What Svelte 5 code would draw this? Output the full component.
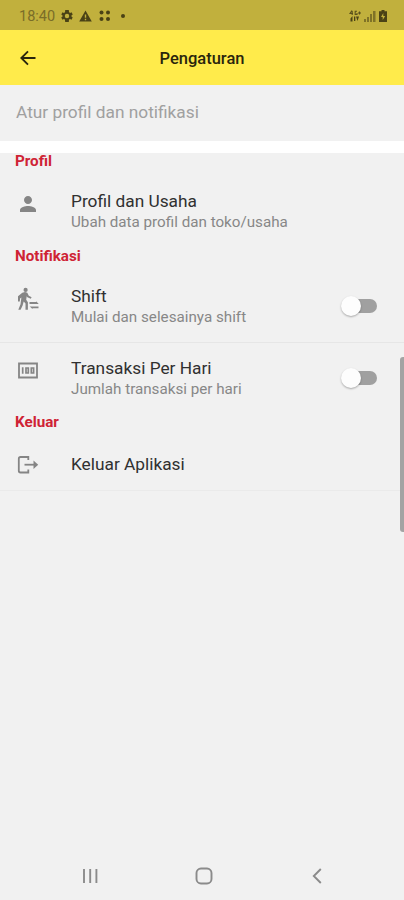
<script lang="ts">
  type Item = {
    icon: string;
    title: string;
    subtitle?: string;
    toggle?: boolean;
    divider?: boolean;
  };

  type Section = {
    label: string;
    items: Item[];
  };

  const sections: Section[] = [
    {
      label: "Profil",
      items: [
        { icon: "person", title: "Profil dan Usaha", subtitle: "Ubah data profil dan toko/usaha" },
      ],
    },
    {
      label: "Notifikasi",
      items: [
        { icon: "shift", title: "Shift", subtitle: "Mulai dan selesainya shift", toggle: true, divider: true },
        { icon: "money", title: "Transaksi Per Hari", subtitle: "Jumlah transaksi per hari", toggle: true },
      ],
    },
    {
      label: "Keluar",
      items: [{ icon: "logout", title: "Keluar Aplikasi", divider: true }],
    },
  ];

  let enabled: Record<string, boolean> = $state({ shift: false, money: false });
</script>

<div class="screen">
  <div class="status">
    <span class="clock">18:40</span>
    <svg class="gear" width="12" height="12" viewBox="2 2 20 20">
      <path fill-rule="evenodd" d="M19.4 13l2.1 1.6-2 3.5-2.5-1a7 7 0 0 1-1.7 1L15 22H9l-.4-3.9a7 7 0 0 1-1.7-1l-2.5 1-2-3.5L4.6 13a7 7 0 0 1 0-2L2.5 9.4l2-3.5 2.500 1a7 7 0 0 1 1.700-1L9 2h6l.4 3.900a7 7 0 0 1 1.700 1l2.500-1 2 3.500-2.200 1.600a7 7 0 0 1 0 2zM12 8.300a3.700 3.700 0 1 0 0 7.400 3.700 3.700 0 0 0 0-7.400z" />
    </svg>
    <svg class="warn" width="13" height="12" viewBox="0 0 13 12">
      <path fill-rule="evenodd" d="M6.500.5L12.800 11.500H.2zM5.800 4.500v3.300h1.400V4.500zM5.800 8.800v1.400h1.400V8.800z" />
    </svg>
    <svg class="apps" width="12" height="12" viewBox="0 0 12 12">
      <circle cx="2.500" cy="2.500" r="2" />
      <circle cx="9" cy="2.500" r="2" />
      <circle cx="2.500" cy="9" r="2" />
      <circle cx="9" cy="9" r="2" />
    </svg>
    <span class="dot"></span>
    <div class="signals">
      <svg width="12" height="12" viewBox="0 0 12 12">
        <path fill="none" stroke="currentColor" stroke-width="1.100" d="M3 .5L1 3.500h3M3.200 1v4M8 1.300H6.200v3.200H8V3M9 3h3M10.500 1.500v3" />
        <path d="M1.500 8.500L3.500 6v5.500H1.500zM5 6.500h1.300V11H5zM7 6.500h3L8.500 11z" />
      </svg>
      <svg width="12" height="12" viewBox="0 0 12 12">
        <path opacity=".55" d="M0 9h2v3H0zM3 7h2v5H3zM6 4h2v8H6zM9 1h2.500v11H9z" />
      </svg>
      <svg width="8" height="12" viewBox="0 0 8 12">
        <path fill-rule="evenodd" d="M2.500 0h3v1.300H8V12H0V1.300h2.500zM4.300 3L2 7h1.700v3L6.200 6H4.300z" />
      </svg>
    </div>
  </div>

  <header>
    <button class="back" aria-label="Kembali">
      <svg width="16" height="16" viewBox="0 0 16 16">
        <path d="M15.500 8H1.500M8 1.300L1.300 8 8 14.700" />
      </svg>
    </button>
    <h1>Pengaturan</h1>
  </header>

  <p class="intro">Atur profil dan notifikasi</p>

  <main>
    {#each sections as section}
      <h2>{section.label}</h2>
      {#each section.items as item}
        <div class="row" class:single={!item.subtitle} class:divider={item.divider}>
          <div class="icon">
            {#if item.icon === "person"}
              <svg width="24" height="24" viewBox="0 0 24 24">
                <path d="M12 12c2.210 0 4-1.790 4-4s-1.790-4-4-4-4 1.790-4 4 1.790 4 4 4zm0 2c-2.670 0-8 1.340-8 4v2h16v-2c0-2.660-5.330-4-8-4z" />
              </svg>
            {:else if item.icon === "shift"}
              <svg width="24" height="24" viewBox="0 0 24 24">
                <circle cx="9.600" cy="2.900" r="2.100" />
                <path d="M6.300 5.800L9 5l2.300.7 1.500 3 2.800 1.500-.8 1.600-3.400-1.600-.7-1-.5 3.500 1.700 2.500v7.600H9.500v-6.300l-1.800-2-1.100 4-2 4.300H2.300l2.200-5.500.9-6.700-1.300.8-.3 3H2V9.300z" />
                <path d="M13.500 16.900V15h6.700v-.8l2.500 2.700zM22.500 19.500v1.800h-6v.8l-2.800-2.600z" />
              </svg>
            {:else if item.icon === "money"}
              <svg width="24" height="24" viewBox="0 0 24 24">
                <path class="line" d="M3 4.500h18v14H3z" />
                <path class="line digits" d="M6.700 8.300v6.400M10 9h2.300v5H10zM15.300 9h2.300v5h-2.300z" />
              </svg>
            {:else}
              <svg width="24" height="24" viewBox="0 0 24 24">
                <path class="line" d="M12.300 7V4H4.500Q2.800 4 2.800 5.700v12.100q0 1.700 1.700 1.700h7.800V16.500" />
                <path class="line" d="M8.500 11.700H20" />
                <path d="M17.500 7.500l4.700 4.200-4.700 4.200z" />
              </svg>
            {/if}
          </div>
          <div class="text">
            <span class="title">{item.title}</span>
            {#if item.subtitle}
              <span class="subtitle">{item.subtitle}</span>
            {/if}
          </div>
          {#if item.toggle}
            <button
              class="switch"
              class:on={enabled[item.icon]}
              role="switch"
              aria-checked={enabled[item.icon]}
              aria-label={item.title}
              onclick={() => (enabled[item.icon] = !enabled[item.icon])}
            >
              <span class="thumb"></span>
            </button>
          {/if}
        </div>
      {/each}
    {/each}
  </main>

  <nav>
    <svg width="16" height="16" viewBox="0 0 16 16">
      <path d="M2 1v14M8.200 1v14M14.400 1v14" />
    </svg>
    <svg width="18" height="18" viewBox="0 0 18 18">
      <rect x="1.500" y="1.500" width="15" height="15" rx="4.500" />
    </svg>
    <svg width="16" height="16" viewBox="0 0 16 16">
      <path d="M11.800 1L4.800 8l7 7" />
    </svg>
  </nav>

  <div class="scrollbar"></div>
</div>

<style>
  :global(body) {
    background: #f1f1f1;
  }
  .screen {
    position: relative;
    display: flex;
    flex-direction: column;
    width: 404px;
    height: 900px;
    overflow: hidden;
    background: #f1f1f1;
    font-family: Roboto, "Liberation Sans", sans-serif;
  }
  svg {
    display: block;
    flex: none;
  }
  button {
    padding: 0;
    border: 0;
    background: none;
  }
  .status {
    display: flex;
    align-items: center;
    flex: none;
    box-sizing: border-box;
    height: 30px;
    padding: 1px 17px 0 19px;
    background: #c1b03d;
    color: #5a511c;
    fill: #4a4216;
  }
  .clock {
    width: 42px;
    padding-top: 1px;
    font-size: 14.5px;
    color: #7a6d28;
  }
  .warn {
    margin-left: 6px;
  }
  .apps {
    margin-left: 7px;
  }
  .dot {
    width: 4px;
    height: 4px;
    margin-left: 10px;
    border-radius: 50%;
    background: #4a4216;
  }
  .signals {
    display: flex;
    gap: 3px;
    margin-left: auto;
  }
  header {
    display: grid;
    grid-template-columns: 60px 1fr 60px;
    align-items: center;
    flex: none;
    height: 55px;
    background: #ffeb4b;
  }
  .back {
    padding-left: 20px;
  }
  .back svg {
    fill: none;
    stroke: #29250d;
    stroke-width: 1.9;
  }
  h1 {
    margin: 0;
    padding-top: 1px;
    font-size: 16.5px;
    font-weight: 500;
    text-align: center;
    color: #29250d;
  }
  .intro {
    flex: none;
    box-sizing: border-box;
    height: 68px;
    margin: 0;
    padding-left: 16px;
    border-bottom: 12px solid #fff;
    font-size: 17.3px;
    line-height: 55px;
    color: #a0a0a0;
  }
  main {
    flex: 1;
  }
  h2 {
    height: 23px;
    margin: 0;
    padding-left: 15px;
    font-size: 15.2px;
    font-weight: 700;
    line-height: 17px;
    color: #cf2334;
  }
  .row {
    display: flex;
    box-sizing: border-box;
    height: 71.5px;
    padding: 14px 27px 0 16px;
  }
  .row.single {
    height: 54px;
    padding-top: 16px;
  }
  .row.divider {
    height: 72px;
    border-bottom: 1px solid #e6e6e6;
  }
  .row.single.divider {
    height: 54px;
    border-color: #eaeaea;
  }
  .icon {
    width: 55px;
    padding-top: 2px;
    fill: #858585;
  }
  .single .icon {
    padding-top: 0;
  }
  .line {
    fill: none;
    stroke: #858585;
    stroke-width: 1.8;
  }
  .digits {
    stroke-width: 1.7;
  }
  .text {
    display: flex;
    flex: 1;
    flex-direction: column;
  }
  .title {
    font-size: 17.3px;
    line-height: 22px;
    color: #303030;
  }
  .subtitle {
    font-size: 15.2px;
    line-height: 21px;
    color: #878787;
  }
  .switch {
    display: flex;
    align-items: center;
    width: 31px;
    height: 14px;
    margin-top: 14px;
    margin-right: 0.5px;
    border-radius: 7px;
    background: #a0a0a0;
  }
  .thumb {
    width: 20px;
    height: 20px;
    margin-left: -5px;
    border-radius: 50%;
    background: #fdfdfd;
    box-shadow: 0 1px 2px rgba(0, 0, 0, 0.3);
  }
  .on .thumb {
    margin-left: 16px;
  }
  nav {
    display: flex;
    align-items: center;
    justify-content: space-between;
    flex: none;
    height: 48px;
    padding: 0 79px 0 82px;
    fill: none;
    stroke: #8b8b8b;
    stroke-width: 1.9;
  }
  .scrollbar {
    position: absolute;
    top: 357px;
    right: 0;
    width: 4px;
    height: 175px;
    border-radius: 3px 0 0 3px;
    background: #a3a3a3;
  }
</style>
